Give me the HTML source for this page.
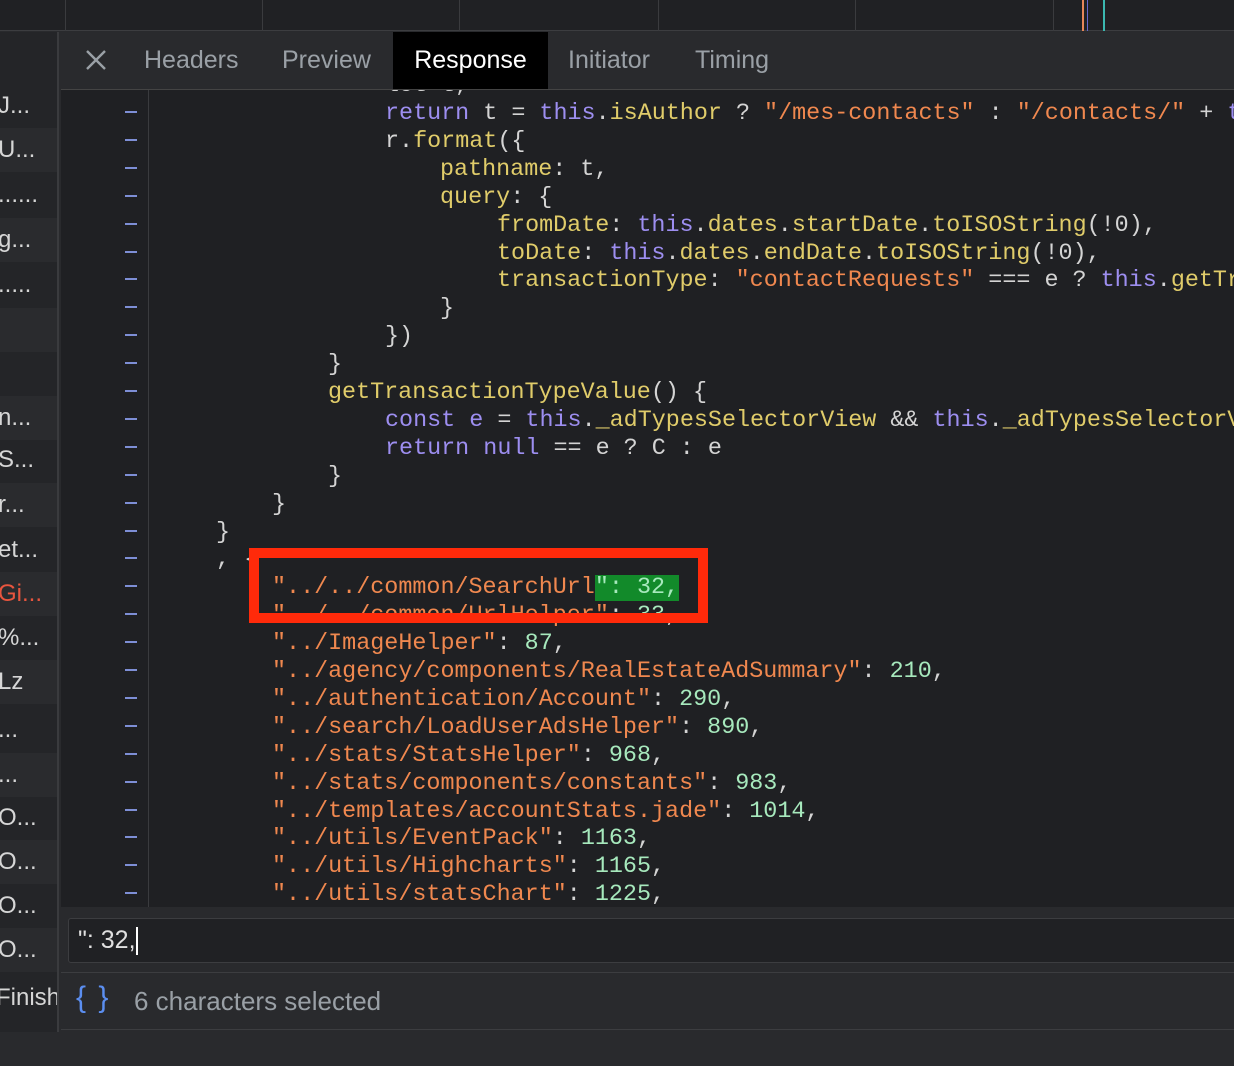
<!DOCTYPE html>
<html><head><meta charset="utf-8"><style>
*{margin:0;padding:0;box-sizing:border-box}
body{width:1234px;height:1066px;background:#292a2d;position:relative;overflow:hidden;font-family:"Liberation Sans",sans-serif}
.top{position:absolute;left:0;top:0;width:1234px;height:31px;background:#202124;border-bottom:1px solid #3c3d40}
.top i{position:absolute;top:0;width:1px;height:31px;background:#3a3b3e}
.left{position:absolute;left:0;top:32px;width:59px;height:1000px;background:#242528;border-right:2px solid #3a3b3e;overflow:hidden}
.left div{position:absolute;left:-2px;height:44px;width:59px;font-size:24px;color:#d6d6d6;line-height:44px;white-space:nowrap}
.tabs{position:absolute;left:61px;top:32px;width:1173px;height:58px;background:#292a2d;border-bottom:1px solid #444;z-index:3}
.tab{position:absolute;top:0;height:57px;line-height:56px;font-size:25px;color:#9aa0a6}
.code{position:absolute;left:61px;top:90px;width:1173px;height:817px;background:#1f2023;overflow:hidden}
.gut{position:absolute;left:87px;top:0;width:1px;height:817px;background:#3a3b3e}
.ln{position:absolute;left:0;height:28px;line-height:28px;font-family:"Liberation Mono",monospace;font-size:23.4px;color:#d4d4d4;white-space:pre}
.d{position:absolute;left:64px;width:12px;height:2px;background:#7e8fd6}
.k{color:#9d8ef0}.p{color:#e0cc6a}.s{color:#f0884f}.n{color:#a7e9bd}
.search{position:absolute;left:68px;top:918px;width:1170px;height:45px;background:#202124;border:1px solid #3c3d40;border-radius:3px;font-size:25px;color:#e0e0e0;line-height:43px;padding-left:9px}
.status{position:absolute;left:61px;top:972px;width:1173px;height:58px;background:#292a2d;border-top:1px solid #3c3d40;border-bottom:1px solid #3c3d40}
.box{position:absolute;left:249px;top:548px;width:459px;height:75px;border:10px solid #ff2a0a;z-index:4}
</style></head><body>
<div class="top"><i style="left:65px"></i><i style="left:262px"></i><i style="left:459px"></i><i style="left:658px"></i><i style="left:855px"></i><i style="left:1053px"></i>
<i style="left:1082px;width:2px;background:#e8875a"></i><i style="left:1087px;background:#66c"></i><i style="left:1103px;width:2px;background:#3bb8b0"></i></div>
<div class="left">
<div style="top:52px">J...</div><div style="top:96px;background:#2a2b2e">U...</div><div style="top:141px">......</div><div style="top:186px;background:#2a2b2e">g...</div><div style="top:231px">.....</div><div style="top:276px;background:#2a2b2e"></div><div style="top:320px"></div>
<div style="top:364px;background:#2a2b2e">n...</div><div style="top:406px">S...</div><div style="top:451px;background:#2a2b2e">r...</div><div style="top:496px">et...</div><div style="top:540px;color:#e8553e;background:#2a2b2e">Gi...</div><div style="top:584px">%...</div><div style="top:628px;background:#2a2b2e">Lz</div><div style="top:676px">...</div><div style="top:721px;background:#2a2b2e">...</div><div style="top:764px">O...</div><div style="top:808px;background:#2a2b2e">O...</div><div style="top:852px">O...</div><div style="top:896px;background:#2a2b2e">O...</div><div style="top:944px;left:-4px">Finish</div>
</div>
<div class="tabs">
<svg style="position:absolute;left:24px;top:17px" width="22" height="22" viewBox="0 0 22 22"><path d="M2 2L20 20M20 2L2 20" stroke="#9aa0a6" stroke-width="2.4"/></svg>
<div class="tab" style="left:83px">Headers</div><div class="tab" style="left:221px">Preview</div>
<div class="tab" style="left:332px;width:155px;background:#000;color:#fff;text-align:center">Response</div>
<div class="tab" style="left:507px">Initiator</div><div class="tab" style="left:634px">Timing</div>
</div>
<div class="code"><div class="gut"></div>
<div id="c"></div>
</div>
<div class="box"></div>
<div class="search">": 32,<span style="display:inline-block;width:2px;height:28px;background:#fff;vertical-align:middle"></span></div>
<div class="status"><span style="position:absolute;left:15px;top:8px;font-size:30px;color:#5b8ef0;letter-spacing:2px">{ }</span><span style="position:absolute;left:73px;top:13px;font-size:26px;color:#9aa0a6">6 characters selected</span></div>
<script>
var L=[
[385,-1,'let t,'],
[385,0,'<span class="k">return</span> t = <span class="k">this</span>.<span class="p">isAuthor</span> ? <span class="s">"/mes-contacts"</span> : <span class="s">"/contacts/"</span> + <span class="k">t</span>'],
[385,1,'r.<span class="p">format</span>({'],
[440,2,'<span class="p">pathname</span>: t,'],
[440,3,'<span class="p">query</span>: {'],
[497,4,'<span class="p">fromDate</span>: <span class="k">this</span>.<span class="p">dates</span>.<span class="p">startDate</span>.<span class="p">toISOString</span>(!0),'],
[497,5,'<span class="p">toDate</span>: <span class="k">this</span>.<span class="p">dates</span>.<span class="p">endDate</span>.<span class="p">toISOString</span>(!0),'],
[497,6,'<span class="p">transactionType</span>: <span class="s">"contactRequests"</span> === e ? <span class="k">this</span>.<span class="p">getTransactionTypeValue</span>'],
[440,7,'}'],[385,8,'})'],[328,9,'}'],
[328,10,'<span class="p">getTransactionTypeValue</span>() {'],
[385,11,'<span class="k">const</span> <span class="k">e</span> = <span class="k">this</span>.<span class="p">_adTypesSelectorView</span> &amp;&amp; <span class="k">this</span>.<span class="p">_adTypesSelectorView</span>'],
[385,12,'<span class="k">return</span> <span class="k">null</span> == e ? C : e'],
[328,13,'}'],[272,14,'}'],[216,15,'}'],[216,16,', {'],
[272,17,'<span class="s">"../../common/SearchUrl</span><span style="background:#128a2a;color:#a7e9bd">": 32,</span>'],
[272,18,'<span class="s">"../../common/UrlHelper"</span>: <span class="n">33</span>,'],
[272,19,'<span class="s">"../ImageHelper"</span>: <span class="n">87</span>,'],
[272,20,'<span class="s">"../agency/components/RealEstateAdSummary"</span>: <span class="n">210</span>,'],
[272,21,'<span class="s">"../authentication/Account"</span>: <span class="n">290</span>,'],
[272,22,'<span class="s">"../search/LoadUserAdsHelper"</span>: <span class="n">890</span>,'],
[272,23,'<span class="s">"../stats/StatsHelper"</span>: <span class="n">968</span>,'],
[272,24,'<span class="s">"../stats/components/constants"</span>: <span class="n">983</span>,'],
[272,25,'<span class="s">"../templates/accountStats.jade"</span>: <span class="n">1014</span>,'],
[272,26,'<span class="s">"../utils/EventPack"</span>: <span class="n">1163</span>,'],
[272,27,'<span class="s">"../utils/Highcharts"</span>: <span class="n">1165</span>,'],
[272,28,'<span class="s">"../utils/statsChart"</span>: <span class="n">1225</span>,']
];
var h='';
L.forEach(function(l){var cy=114+l[1]*27.9-90;
h+='<div class="ln" style="left:'+(l[0]-61)+'px;top:'+(cy-14)+'px">'+l[2]+'</div>';
if(l[1]>=0)h+='<div class="d" style="top:'+(cy-3)+'px"></div>';});
document.getElementById('c').innerHTML=h;
</script>
</body></html>
